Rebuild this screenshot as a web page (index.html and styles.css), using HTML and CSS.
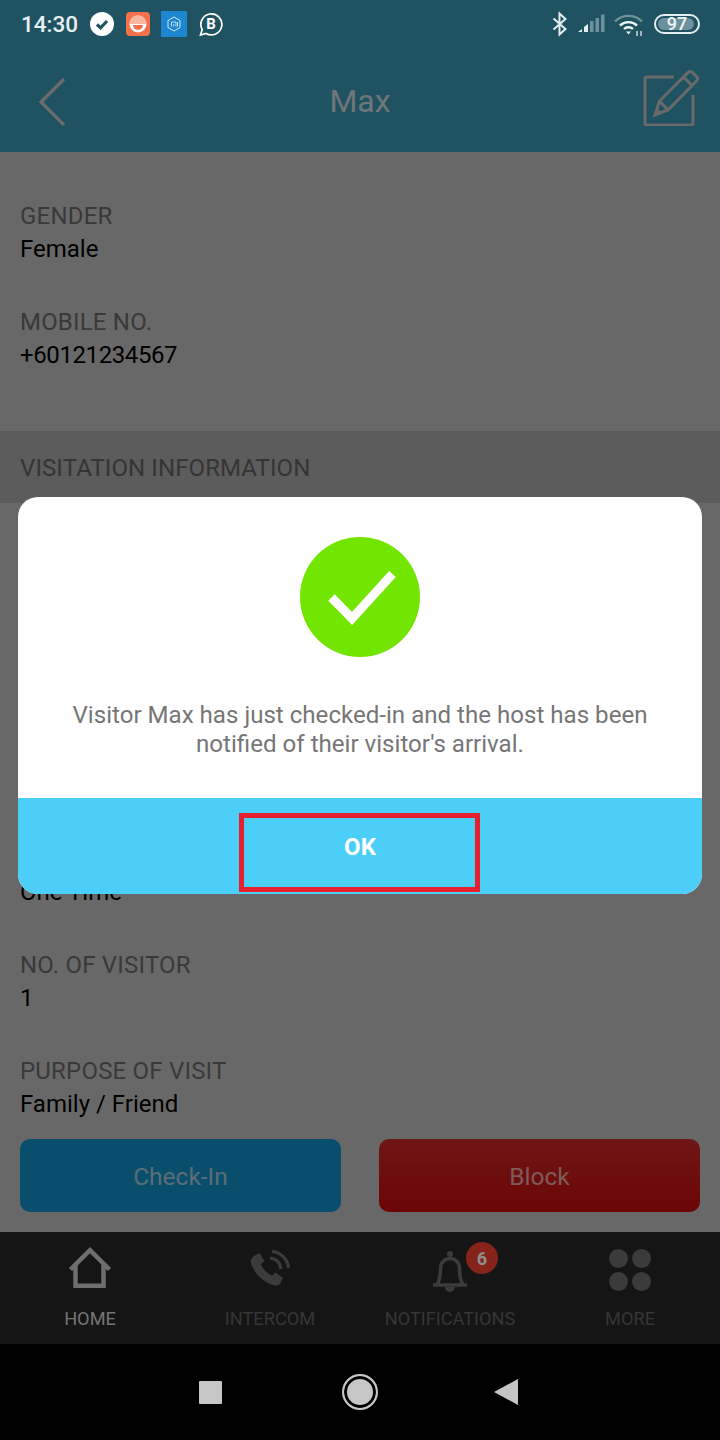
FILE: index.html
```html
<!DOCTYPE html>
<html lang="en">
<head>
<meta charset="utf-8">
<title>Max</title>
<link rel="stylesheet" href="styles.css">
</head>
<body>
<div class="screen">
  <div class="status">
    <span class="time">14:30</span>
    <svg class="si" width="24" height="26" viewBox="0 0 26 26"><circle cx="13" cy="13" r="13" fill="#fff"/><path d="M7.500 13.500l4 3.600 7-7.400" fill="none" stroke="#1f5361" stroke-width="3.400"/></svg>
    <svg class="si" width="24" height="26" viewBox="0 0 24 26"><rect y="1" width="24" height="24" rx="4" fill="#f4704a"/><circle cx="12" cy="13" r="8.500" fill="#fff"/><path d="M3.500 13a8.500 8.500 0 0 1 17 0z" fill="#f9b79f"/><path d="M7 14h10a5 5 0 0 1-10 0z" fill="#f4704a"/></svg>
    <svg class="si" width="26" height="26" viewBox="0 0 26 26"><rect width="26" height="26" fill="#1d86d0"/><path d="M13 6l6 3.500v7L13 20l-6-3.500v-7z" fill="none" stroke="#cfe8f8" stroke-width="1"/><path d="M10.500 11h4.500v4.500M10.500 11v4.500M12.800 13v2.500M16.500 11v4.500" fill="none" stroke="#cfe8f8" stroke-width=".9"/></svg>
    <svg class="si" width="24" height="26" viewBox="0 0 24 26"><path d="M1.500 24l1.700-5.500A10.500 10.500 0 1 1 7 22.400z" fill="none" stroke="#fff" stroke-width="1.700"/><text x="12" y="18" class="bee">B</text></svg>
    <span class="status-gap"></span>
    <svg class="sr" width="16" height="26" viewBox="0 0 16 26"><path d="M1.500 7.500l12 10.500-6 5.500V2.500l6 5.500-12 10.500" fill="none" stroke="#e4eef0" stroke-width="2"/></svg>
    <svg class="sr" width="28" height="26" viewBox="0 0 28 26"><path d="M1 21h4v-3zM7 21h4v-8l-4 3z" fill="#e4eef0"/><path d="M13 21h3.500V10H13zM18.500 21H22V7h-3.500zM24 21h3.500V3.500H24z" fill="#6d929b"/></svg>
    <svg class="sr" width="30" height="26" viewBox="0 0 30 26"><path d="M1 10.500a19 19 0 0 1 27 0" fill="none" stroke="#6d929b" stroke-width="2.400"/><path d="M6 14.500a12.500 12.500 0 0 1 17 0M10 18a6.500 6.500 0 0 1 9 0" fill="none" stroke="#f0f5f6" stroke-width="2.400"/><path d="M12 20.500h5L14.500 23.500z" fill="#f0f5f6"/><path d="M23 20v5M27 20v5" stroke="#d6e2e5" stroke-width="1.400"/></svg>
    <span class="battery"><span class="battery-fill"></span><span class="battery-num">97</span></span>
  </div>
  <header class="topbar">
    <svg width="30" height="50" viewBox="0 0 30 50"><path d="M27 3L4 26l23 23" fill="none" stroke="#6c6c6c" stroke-width="3.200"/></svg>
    <h1 class="title">Max</h1>
    <svg class="edit" width="56" height="58" viewBox="0 0 56 58"><path d="M31 9H3.500a1.500 1.500 0 0 0-1.500 1.500v45a1.500 1.500 0 0 0 1.500 1.500h45a1.500 1.500 0 0 0 1.500-1.500V27" fill="none" stroke="#6a6a6a" stroke-width="3"/><path d="M12 47l4.500-14L45 4.500a3 3 0 0 1 4.500 0l4 4a3 3 0 0 1 0 4.500L25 42zM40.500 9l9 9M16.500 33l8.500 9" fill="none" stroke="#6a6a6a" stroke-width="3"/><path d="M12 47l2.200-7 4.800 4.800z" fill="#6a6a6a"/></svg>
  </header>
  <main class="content">
    <div class="fields">
      <div class="field"><div class="label">GENDER</div><div class="value">Female</div></div>
      <div class="field"><div class="label">MOBILE NO.</div><div class="value value-phone">+60121234567</div></div>
    </div>
    <div class="section">VISITATION INFORMATION</div>
    <div class="fields fields-visit">
      <div class="field"><div class="label">VISIT TYPE</div><div class="value">One Time</div></div>
      <div class="field"><div class="label">NO. OF VISITOR</div><div class="value">1</div></div>
      <div class="field"><div class="label">PURPOSE OF VISIT</div><div class="value">Family / Friend</div></div>
    </div>
    <div class="actions">
      <div class="btn btn-check">Check-In</div>
      <div class="btn btn-block">Block</div>
    </div>
  </main>
  <nav class="tabs">
    <div class="tab tab-active">
      <div class="tab-icon"><svg class="home" width="46" height="42" viewBox="0 0 46 42"><path d="M3.500 22.500L23 3.200l19.500 19.300" fill="none" stroke="#6e6e6e" stroke-width="4.500"/><path d="M8.500 18v20.700h28V18" fill="none" stroke="#6e6e6e" stroke-width="4.500"/></svg></div>
      <div class="tab-label">HOME</div>
    </div>
    <div class="tab">
      <div class="tab-icon"><svg width="42" height="42" viewBox="0 0 42 42"><path d="M6 6.500l4.500-2.500 5 8-3.500 3c1 4 6.500 10 11 11.500l3.500-3 7.500 5.500-2.500 5c-2 3-5.500 3-9 1.500C12 32 4.500 22 2 14.500c-.8-3.500.8-6.300 4-8z" fill="#3b3b3b"/><path d="M21 9a12 12 0 0 1 11 11M23 2.500A18 18 0 0 1 39.500 19" fill="none" stroke="#3b3b3b" stroke-width="3.200"/></svg></div>
      <div class="tab-label">INTERCOM</div>
    </div>
    <div class="tab">
      <div class="tab-icon tab-bell"><svg width="40" height="46" viewBox="0 0 40 46"><path d="M3 38h34M7 38c3-5 3.500-10 3.500-17a9.500 9.500 0 0 1 19 0c0 7 .5 12 3.500 17" fill="none" stroke="#3b3b3b" stroke-width="3.500"/><circle cx="20" cy="7" r="3" fill="#3b3b3b"/><path d="M15 40a5 5 0 0 0 10 0z" fill="#3b3b3b"/></svg><span class="badge">6</span></div>
      <div class="tab-label">NOTIFICATIONS</div>
    </div>
    <div class="tab">
      <div class="tab-icon"><div class="dots"><i></i><i></i><i></i><i></i></div></div>
      <div class="tab-label">MORE</div>
    </div>
  </nav>
  <div class="sysnav">
    <span class="sys-square"></span>
    <span class="sys-circle"></span>
    <svg width="24" height="26" viewBox="0 0 24 26"><path d="M24 0v26L0 13z" fill="#c6c6c6"/></svg>
  </div>
  <div class="modal">
    <div class="modal-body">
      <svg width="120" height="120" viewBox="0 0 120 120"><circle cx="60" cy="60" r="60" fill="#72e500"/><path d="M31.500 60.500l20.500 21 40.500-44.500" fill="none" stroke="#fff" stroke-width="9"/></svg>
      <p class="message">Visitor Max has just checked-in and the host has been notified of their visitor's arrival.</p>
    </div>
    <div class="modal-foot"><span class="ok">OK</span></div>
  </div>
</div>
</body>
</html>
```
FILE: styles.css
```css
* { box-sizing: border-box; }
html, body { margin: 0; padding: 0; }
body { font-family: Roboto, "Liberation Sans", sans-serif; background: #000; }
.screen { position: relative; width: 720px; height: 1440px; display: flex; flex-direction: column; overflow: hidden; background: #686868; }

.status { height: 52px; background: #1f5361; display: flex; align-items: center; padding: 0 20px 4px 21px; flex: none; }
.time { font-size: 22.500px; font-weight: 500; color: #e6eff1; width: 58px; margin-right: 11px; }
.si { margin-right: 12px; flex: none; }
.si:nth-of-type(2) { margin-right: 11px; }
.bee { font: 700 15px Roboto, sans-serif; fill: #fff; text-anchor: middle; }
.status-gap { flex: 1; }
.sr { margin-right: 9px; flex: none; }
.battery { position: relative; width: 46px; height: 20px; border: 2px solid #e4eef0; border-radius: 10px; margin-left: 1px; display: flex; align-items: center; justify-content: center; }
.battery-fill { position: absolute; left: 2px; top: 2px; bottom: 2px; right: 4px; background: #6d929b; border-radius: 6px; }
.battery-num { position: relative; font-size: 18px; font-weight: 500; color: #eef4f5; line-height: 1; }

.topbar { height: 100px; flex: none; background: #1f5361; display: grid; grid-template-columns: 1fr auto 1fr; align-items: center; padding: 0 21px 2px 37px; }
.title { margin: 0; font-size: 32px; font-weight: 400; color: #6f7679; line-height: 1; transform: translateX(-8px); }
.edit { margin-top: -8px; justify-self: end; }

.content { flex: 1; display: flex; flex-direction: column; background: #686868; }
.fields { padding: 48px 20px 0; display: flex; flex-direction: column; gap: 40px; height: 279px; }
.fields-visit { padding-top: 340px; height: 636px; }
.field { height: 66px; }
.label { font-size: 24px; letter-spacing: .2px; line-height: 33px; color: #393939; }
.value { font-size: 24px; line-height: 33px; color: #000; }
.value-phone { letter-spacing: -.4px; }
.section { height: 72px; background: #5c5c5c; padding: 2px 20px 0; display: flex; align-items: center; font-size: 24px; letter-spacing: .1px; color: #353535; }
.actions { display: flex; justify-content: space-between; padding: 0 20px; }
.btn { width: 321px; height: 73px; border-radius: 10px; display: flex; align-items: center; justify-content: center; font-size: 24.500px; padding-top: 2px; }
.btn-check { background: #0a4e6e; color: #5b6d76; }
.btn-block { background: linear-gradient(#6f1616, #6c0505); color: #7e5a5a; }

.tabs { height: 112px; flex: none; background: #151515; display: grid; grid-template-columns: repeat(4, 180px); }
.tab { display: flex; flex-direction: column; align-items: center; padding-top: 14px; }
.tab-icon { position: relative; height: 48px; display: flex; align-items: center; justify-content: center; }
.home { margin-top: -4px; }
.tab-label { font-size: 18.200px; line-height: 24px; margin-top: 13px; color: #363636; }
.tab-active .tab-label { color: #767676; }
.badge { position: absolute; left: 36px; top: -4px; width: 32px; height: 32px; border-radius: 50%; background: #86231a; color: #8e8e8e; font-size: 18px; font-weight: 700; display: flex; align-items: center; justify-content: center; }
.dots { display: grid; grid-template-columns: 19px 19px; grid-auto-rows: 19px; gap: 4px; }
.dots i { display: block; border-radius: 50%; background: #3b3b3b; }

.sysnav { height: 96px; flex: none; background: #000; display: flex; align-items: center; justify-content: center; padding-right: 3px; }
.sys-square { width: 23px; height: 23px; background: #c6c6c6; border-radius: 1px; }
.sys-circle { width: 36px; height: 36px; border-radius: 50%; background: #c6c6c6; border: 2px solid #c6c6c6; box-shadow: inset 0 0 0 3px #000; margin: 0 116px 0 120px; }

.modal { position: absolute; left: 18px; top: 497px; width: 684px; height: 397px; background: #fff; border-radius: 20px; overflow: hidden; display: flex; flex-direction: column; }
.modal-body { height: 301px; padding-top: 40px; display: flex; flex-direction: column; align-items: center; }
.message { margin: 44px 0 0; width: 600px; text-align: center; font-size: 24.100px; line-height: 29px; color: #767676; }
.modal-foot { flex: 1; background: #4bcff9; padding: 15px 1px 0 0; display: flex; justify-content: center; align-items: flex-start; }
.ok { width: 241px; height: 79px; border: 5px solid #e7202e; display: flex; align-items: center; justify-content: center; color: #fff; font-size: 24px; font-weight: 700; padding: 0 0 11px 1px; }
```
